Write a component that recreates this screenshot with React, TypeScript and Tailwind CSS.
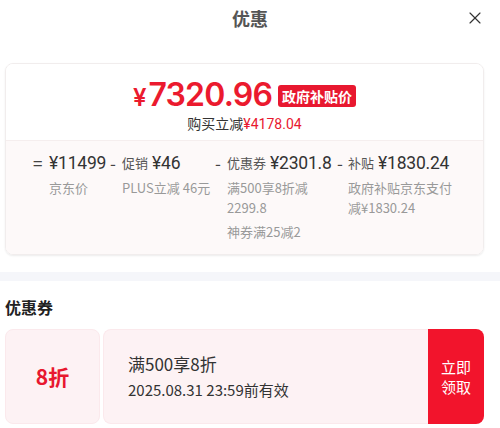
import {X} from "lucide-react";

const font = {fontFamily: '"Noto Sans CJK SC", "Noto Sans", sans-serif'};
const numFont = {fontFamily: 'Roboto, "Noto Sans CJK SC", sans-serif'};

type ColProps = {
    op: string;
    opW: string;
    w: string;
    label?: string;
    price: string;
    subs: string[];
    subW?: string;
    extra?: string;
}

const Col = ({op, opW, w, label, price, subs, subW, extra}: ColProps) => {
    return (
        <div className={`flex ${w}`}>
            <div className={`${opW} shrink-0 text-[17px] leading-[24px] text-[#444]`}>{op}</div>
            <div className="flex flex-col">
                <div className="flex items-center whitespace-nowrap leading-[24px]">
                    {label && <span className="text-[13px] text-[#555] mr-[4px]">{label}</span>}
                    <span className="text-[17.5px] text-[#333] tracking-[-0.2px]" style={numFont}>{price}</span>
                </div>
                <div className={`mt-[3px] text-[13px] leading-[20px] text-[#999] ${subW ?? ""}`}>
                    {subs.map((s, i) => <div key={i}>{s}</div>)}
                </div>
                {extra && <div className="mt-[4px] text-[13px] leading-[20px] text-[#999]">{extra}</div>}
            </div>
        </div>
    )
}

export default function App() {
    return (
        <div className="w-[500px] h-[428px] bg-white overflow-hidden" style={font}>
            <div className="relative h-[36px] flex items-center justify-center">
                <h2 className="text-[18px] font-bold text-[#555]">优惠</h2>
                <X className="absolute right-[15px] top-[8px] text-[#333]" size={20} strokeWidth={1.4}/>
            </div>

            <div className="pl-[5px] pr-[16px] mt-[27px]">
                <div className="rounded-[8px] border border-[#f1eded] shadow-[0_1px_2px_rgba(0,0,0,0.08)] overflow-hidden">
                    <div className="h-[76px] flex flex-col items-center bg-white">
                        <div className="flex items-center gap-[6px] mt-[14px] h-[36px]">
                            <div className="text-[#eb1a2e] font-semibold flex items-baseline" style={{fontFamily: 'Inter, "Noto Sans", sans-serif'}}>
                                <span className="text-[24px] mr-[2px]">¥</span>
                                <span className="text-[32px] leading-[36px] tracking-[-0.8px]">7320.96</span>
                            </div>
                            <span className="bg-[#e8182f] text-white text-[14px] font-bold leading-[22px] px-[4px] rounded-[3px]">政府补贴价</span>
                        </div>
                        <div className="text-[14px] leading-[20px] -mt-[1px] text-[#333]">
                            购买立减<span className="text-[#e8182f]" style={numFont}>¥4178.04</span>
                        </div>
                    </div>
                    <div className="border-t border-[#f5eeee] bg-[#fdf9f9] pl-[27px] pt-[10px] pb-[12px] flex">
                        <Col op="=" opW="w-[16px]" w="w-[77px]" price="¥11499" subs={["京东价"]}/>
                        <Col op="-" opW="w-[12px]" w="w-[105px]" label="促销" price="¥46" subs={["PLUS立减 46元"]}/>
                        <Col op="-" opW="w-[12px]" w="w-[122px]" label="优惠券" price="¥2301.8" subs={["满500享8折减", "2299.8"]} subW="w-[86px]" extra="神券满25减2"/>
                        <Col op="-" opW="w-[11px]" w="w-[130px]" label="补贴" price="¥1830.24" subs={["政府补贴京东支付", "减¥1830.24"]}/>
                    </div>
                </div>
            </div>

            <div className="mt-[17px] h-[9px] bg-[#f5f6fa]"></div>

            <div className="pl-[5px] pr-[16px]">
                <h3 className="mt-[14px] text-[16px] leading-[24px] font-bold text-[#222]">优惠券</h3>
                <div className="mt-[10px] h-[95px] flex">
                    <div className="w-[95px] rounded-[8px] bg-[#fdf2f4] border border-[#fbe9ec] flex items-center justify-center">
                        <span className="text-[#e8182f] text-[21px] font-bold">8折</span>
                    </div>
                    <div className="ml-[3px] flex-1 rounded-l-[8px] bg-[#fdf2f4] border border-r-0 border-[#fbe9ec] flex flex-col justify-center pl-[24px]">
                        <div className="text-[17px] leading-[24px] text-[#333]">满500享8折</div>
                        <div className="text-[15px] leading-[22px] text-[#333] mt-[3px]">2025.08.31 23:59前有效</div>
                    </div>
                    <button className="w-[56px] rounded-r-[8px] bg-[#f2142c] text-white text-[15px] leading-[20px] flex flex-col items-center justify-center">
                        <span>立即</span>
                        <span>领取</span>
                    </button>
                </div>
            </div>
        </div>
    )
}
